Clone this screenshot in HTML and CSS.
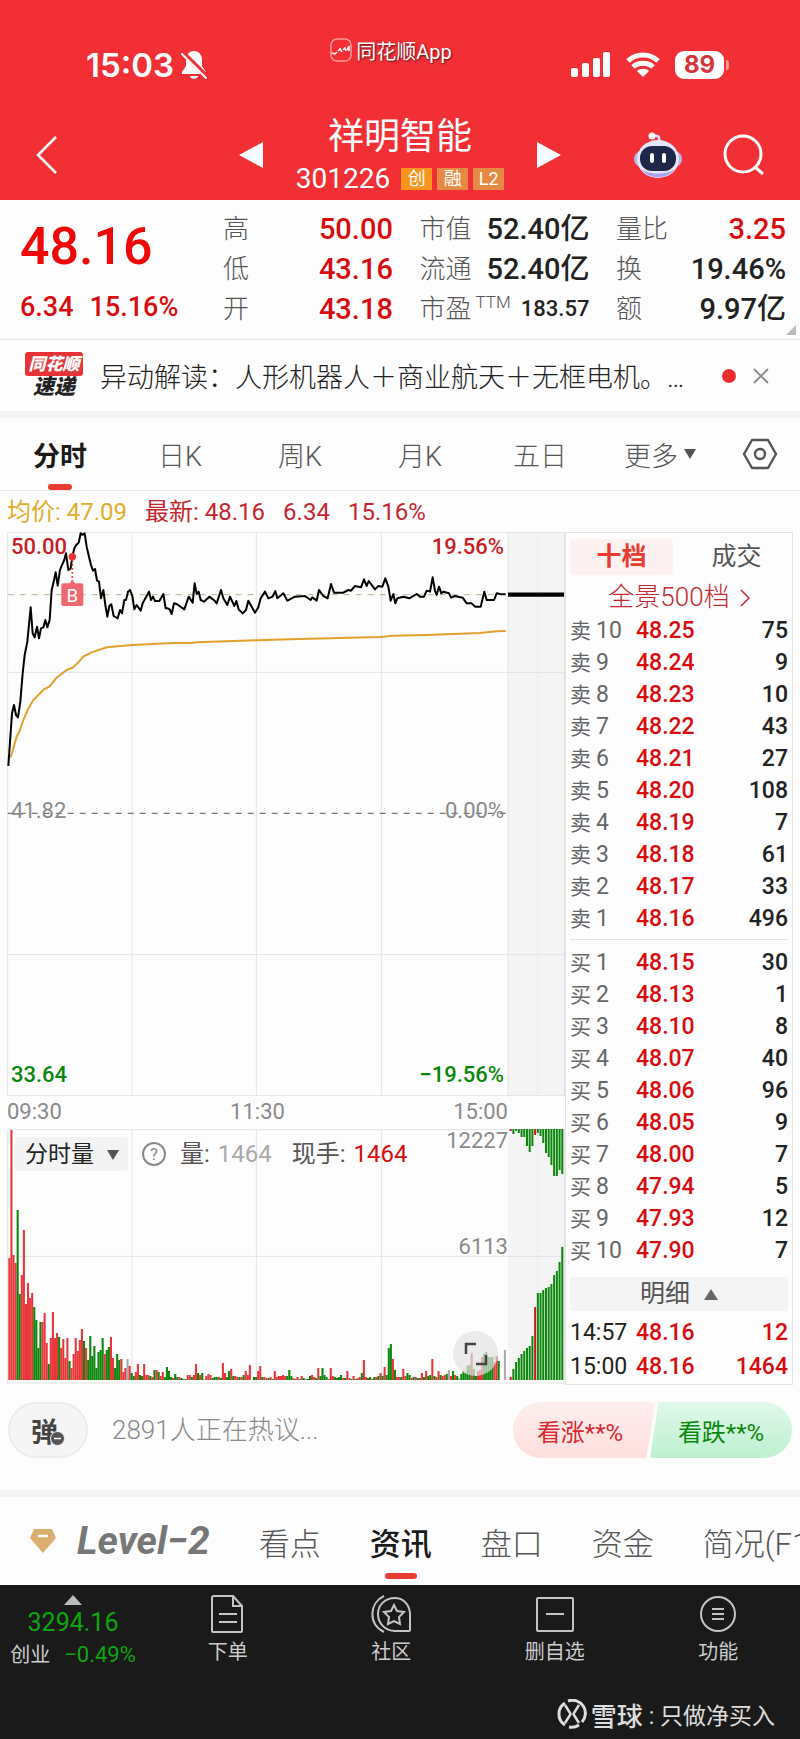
FILE: index.html
```html
<!DOCTYPE html>
<html lang="zh-CN">
<head>
  <meta charset="UTF-8" />
  <meta name="viewport" content="width=device-width, initial-scale=1.0"/>
  <title>祥明智能 301226</title>
  <link rel="stylesheet" href="styles.css">
</head>
<body>

  <!-- Header -->
  <header class="header">
    <div class="status-bar">
      <div class="status-left">
        <span class="clock">15:03</span>
        <svg width="28" height="30" viewBox="0 0 28 30">
          <path d="M14 1c-5 0-8 4-8 9v6l-4 6v2h24v-2l-4-6v-6c0-5-3-9-8-9zM10 26c1 4 7 4 8 0z" fill="#fff"/>
          <path d="M3 3l24 24" stroke="#f12f35" stroke-width="5"/>
          <path d="M2 4l24 24" stroke="#fff" stroke-width="2" stroke-linecap="round"/>
        </svg>
      </div>
      <div class="app-mark">
        <svg width="22" height="24" viewBox="0 0 22 24" fill="none" stroke="#fff">
          <rect x="1" y="1" width="20" height="22" rx="6" stroke="#ff9a9c" stroke-width="1.5"/>
          <path d="M2 15l3 1 2-2M8 13l2-2 2 3M13 12l2-2 1 3M17 12l2-4v5" stroke-width="1.5"/>
        </svg>
        <span>同花顺App</span>
      </div>
      <div class="status-right">
        <svg width="40" height="26" viewBox="0 0 40 26" fill="#fff">
          <rect x="0" y="16" width="7" height="9" rx="2"/>
          <rect x="11" y="11" width="7" height="14" rx="2"/>
          <rect x="22" y="6" width="7" height="19" rx="2"/>
          <rect x="32" y="0" width="7" height="25" rx="2"/>
        </svg>
        <svg width="34" height="26" viewBox="0 0 34 26" fill="none" stroke="#fff" stroke-width="5">
          <path d="M2 9c8-8 22-8 30 0"/>
          <path d="M7 15c5-5 15-5 20 0"/>
          <path d="M17 25l-6-6c3-3 9-3 12 0z" fill="#fff" stroke="none"/>
        </svg>
        <span class="battery">89</span>
      </div>
    </div>

    <div class="title-bar">
      <button class="icon-btn" aria-label="返回">
        <svg width="24" height="42" viewBox="0 0 24 42" fill="none" stroke="#fff" stroke-width="2.5">
          <path d="M21 3L3 21l18 18"/>
        </svg>
      </button>
      <div class="stock-switch">
        <button class="icon-btn" aria-label="上一只">
          <svg width="24" height="26" viewBox="0 0 24 26" fill="#fff"><path d="M24 0v26L0 13z"/></svg>
        </button>
        <div class="stock-title">
          <h1>祥明智能</h1>
          <div class="stock-code">
            <span class="code">301226</span>
            <span class="tag tag-main">创</span>
            <span class="tag">融</span>
            <span class="tag">L2</span>
          </div>
        </div>
        <button class="icon-btn" aria-label="下一只">
          <svg width="24" height="26" viewBox="0 0 24 26" fill="#fff"><path d="M0 0v26l24-13z"/></svg>
        </button>
      </div>
      <div class="title-tools">
        <button class="icon-btn" aria-label="智能助手">
          <svg width="50" height="48" viewBox="0 0 50 48">
            <path d="M26 10c1-5-2-6-5-5" fill="none" stroke="#dfe0ff" stroke-width="2.5"/>
            <circle cx="19" cy="5" r="3.5" fill="#fff"/>
            <rect x="1" y="20" width="48" height="16" rx="8" fill="#b9b6f5"/>
            <ellipse cx="25" cy="28" rx="21" ry="19" fill="#e6e6ff"/>
            <path d="M8 38c8 11 26 11 34 0-8 6-26 6-34 0z" fill="#a9a4f2"/>
            <rect x="7" y="15" width="36" height="25" rx="12" fill="#1e2747"/>
            <rect x="17" y="22" width="4" height="10" rx="2" fill="#fff"/>
            <rect x="29" y="22" width="4" height="10" rx="2" fill="#fff"/>
          </svg>
        </button>
        <button class="icon-btn" aria-label="搜索">
          <svg width="42" height="42" viewBox="0 0 42 42" fill="none" stroke="#fff" stroke-width="3">
            <circle cx="20" cy="20" r="18"/>
            <path d="M32 33l8 7"/>
          </svg>
        </button>
      </div>
    </div>
  </header>

  <!-- Quote -->
  <section class="quote">
    <div class="quote-main">
      <div class="price">48.16</div>
      <div class="change"><span>6.34</span><span>15.16%</span></div>
    </div>
    <dl class="stats stats-a">
      <dt>高</dt><dd class="red">50.00</dd>
      <dt>低</dt><dd class="red">43.16</dd>
      <dt>开</dt><dd class="red">43.18</dd>
    </dl>
    <dl class="stats stats-b">
      <dt>市值</dt><dd>52.40亿</dd>
      <dt>流通</dt><dd>52.40亿</dd>
      <dt>市盈<sup>TTM</sup></dt><dd class="small">183.57</dd>
    </dl>
    <dl class="stats stats-c">
      <dt>量比</dt><dd class="red">3.25</dd>
      <dt>换</dt><dd>19.46%</dd>
      <dt>额</dt><dd>9.97亿</dd>
    </dl>
    <span class="corner"></span>
  </section>

  <!-- News -->
  <section class="news">
    <div class="news-logo">
      <span class="news-brand">同花顺</span>
      <span class="news-kind">速递</span>
    </div>
    <a class="news-text" href="#">异动解读：人形机器人＋商业航天＋无框电机。…</a>
    <span class="news-dot"></span>
    <button class="icon-btn" aria-label="关闭">
      <svg width="16" height="16" viewBox="0 0 16 16" stroke="#888" stroke-width="1.8"><path d="M1 1l14 14M15 1L1 15"/></svg>
    </button>
  </section>

  <!-- Period tabs -->
  <nav class="period-tabs">
    <button class="active">分时</button>
    <button>日K</button>
    <button>周K</button>
    <button>月K</button>
    <button>五日</button>
    <button class="more">更多<svg width="12" height="10" viewBox="0 0 12 10" fill="#555"><path d="M0 0h12L6 10z"/></svg></button>
    <button class="icon-btn" aria-label="设置">
      <svg width="36" height="32" viewBox="0 0 36 32" fill="none" stroke="#555" stroke-width="2.4">
        <path d="M10 2h16l8 14-8 14H10L2 16z" stroke-linejoin="round"/>
        <circle cx="18" cy="16" r="5"/>
      </svg>
    </button>
  </nav>

  <div class="legend">
    <span class="avg">均价: 47.09</span>
    <span>最新: 48.16</span>
    <span>6.34</span>
    <span>15.16%</span>
  </div>

  <main class="board">
    <div class="charts">
      <!-- Price chart -->
      <div class="price-chart">
        <svg viewBox="21 36 1674 1692" fill="none">
          <rect x="1524" y="36" width="170" height="1692" fill="#f4f4f4"/>
          <path class="grid" d="M23 37H1694M23 457H1694M23 1304H1694M23 1727H1694M23 37V1728M396 37V1728M769 37V1728M1144 37V1728M1524 37V1728M1693 37V1728"/>
          <path d="M1613 37V1728" stroke="#e2e2e2" stroke-width="3" stroke-dasharray="6 6"/>
          <path d="M23 880H1524" stroke="#777" stroke-width="4" stroke-dasharray="18 18"/>
          <path d="M23 224H1524" stroke="#b9b48a" stroke-width="3" stroke-dasharray="18 18"/>
          <polyline stroke="#e2a02c" stroke-width="6" points="32,712 50,650 58,635 70,600 85,565 100,540 132,508 148,500 170,473 200,450 218,443 232,430 250,410 275,397 320,382 397,375 520,369 575,369 590,367 770,361 870,358 1140,351 1180,347 1280,345 1440,339 1490,334 1517,333"/>
          <polyline stroke="#000" stroke-width="6" stroke-linejoin="round" points="25,738 36,580 42,555 48,585 54,592 61,545 68,460 74,405 82,365 92,262 98,340 104,352 111,320 117,355 123,325 130,322 136,300 142,322 149,300 155,210 161,185 167,157 173,197 180,150 186,135 192,122 198,100 205,150 212,145 217,110 223,85 229,75 236,68 242,40 248,44 254,40 260,80 267,110 273,135 279,152 285,147 291,182 297,185 303,235 310,210 316,255 322,290 328,258 334,253 341,288 353,295 360,270 366,280 373,240 378,240 384,215 390,210 397,228 403,268 410,255 422,272 428,250 447,215 453,240 459,230 465,243 478,243 490,222 497,265 503,265 509,268 515,282 522,250 530,252 553,268 566,230 578,248 584,190 590,222 596,215 602,240 612,245 628,230 645,243 650,250 663,210 670,235 682,255 690,230 703,258 709,243 716,268 728,280 738,270 745,242 752,255 765,278 775,262 782,235 795,215 805,235 818,230 826,213 832,235 850,220 862,242 885,230 915,228 932,240 937,232 950,242 957,210 970,228 983,235 993,192 1002,218 1030,218 1045,210 1053,212 1065,198 1083,202 1092,178 1100,198 1106,183 1125,208 1135,198 1147,200 1156,175 1165,200 1172,242 1180,222 1186,250 1192,235 1210,230 1228,235 1250,222 1260,230 1272,230 1280,212 1290,215 1298,172 1305,212 1310,225 1317,200 1324,220 1330,215 1347,220 1353,233 1365,228 1388,233 1400,250 1415,250 1425,260 1442,260 1453,215 1460,240 1482,240 1490,220 1500,222 1517,223"/>
          <path d="M1524 224H1692" stroke="#000" stroke-width="13"/>
          <path d="M217 120V190" stroke="#e8323c" stroke-width="5" stroke-dasharray="5 7"/>
          <circle cx="217" cy="110" r="11" fill="#ee3434"/>
          <path d="M190 190h18l9-9 9 9h18q6 0 6 6v56q0 6-6 6h-54q-6 0-6-6v-56q0-6 6-6z" fill="#f0686f"/>
          <text class="marker" x="217" y="245">B</text>
        </svg>
        <span class="lab top-left red">50.00</span>
        <span class="lab top-right red">19.56%</span>
        <span class="lab mid-left">41.82</span>
        <span class="lab mid-right">0.00%</span>
        <span class="lab bottom-left green">33.64</span>
        <span class="lab bottom-right green">−19.56%</span>
      </div>

      <div class="time-axis"><span>09:30</span><span>11:30</span><span>15:00</span></div>

      <!-- Volume chart -->
      <div class="volume-chart">
        <svg viewBox="21 237 1674 765">
          <rect x="1524" y="237" width="170" height="753" fill="#f4f4f4"/>
          <path class="grid" d="M23 239H1694M23 619H1694M23 999H1694M23 239V999M396 239V999M769 239V999M1144 239V999M1693 239V999"/>
          <path d="M1613 239V990" stroke="#e2e2e2" stroke-width="3" stroke-dasharray="6 6"/>
          <g id="volumeBars"></g>
          <g id="depthBars"></g>
        </svg>
        <div class="volume-tools">
          <div class="select-box">
            <select aria-label="指标">
              <option>分时量</option>
            </select>
            <svg width="12" height="10" viewBox="0 0 12 10" fill="#555"><path d="M0 0h12L6 10z"/></svg>
          </div>
          <button class="help" aria-label="说明">?</button>
          <span class="vol">量: <b>1464</b></span>
          <span>现手: <b class="red">1464</b></span>
        </div>
        <span class="lab vol-max">12227</span>
        <span class="lab vol-mid">6113</span>
        <button class="expand" aria-label="全屏">
          <svg width="24" height="24" viewBox="0 0 24 24" fill="none" stroke="#444" stroke-width="2.5"><path d="M2 12V2h10M22 13v9H12"/></svg>
        </button>
      </div>
    </div>

    <!-- Order book -->
    <aside class="orders">
      <div class="order-tabs">
        <button class="active">十档</button>
        <button>成交</button>
      </div>
      <a class="depth-link" href="#">全景500档
        <svg width="10" height="18" viewBox="0 0 10 18" fill="none" stroke="#c4262e" stroke-width="1.5"><path d="M1 1l8 8-8 8"/></svg>
      </a>
      <table class="sell">
        <tr><th>卖<i>10</i></th><td>48.25</td><td>75</td></tr>
        <tr><th>卖<i>9</i></th><td>48.24</td><td>9</td></tr>
        <tr><th>卖<i>8</i></th><td>48.23</td><td>10</td></tr>
        <tr><th>卖<i>7</i></th><td>48.22</td><td>43</td></tr>
        <tr><th>卖<i>6</i></th><td>48.21</td><td>27</td></tr>
        <tr><th>卖<i>5</i></th><td>48.20</td><td>108</td></tr>
        <tr><th>卖<i>4</i></th><td>48.19</td><td>7</td></tr>
        <tr><th>卖<i>3</i></th><td>48.18</td><td>61</td></tr>
        <tr><th>卖<i>2</i></th><td>48.17</td><td>33</td></tr>
        <tr><th>卖<i>1</i></th><td>48.16</td><td>496</td></tr>
      </table>
      <table class="buy">
        <tr><th>买<i>1</i></th><td>48.15</td><td>30</td></tr>
        <tr><th>买<i>2</i></th><td>48.13</td><td>1</td></tr>
        <tr><th>买<i>3</i></th><td>48.10</td><td>8</td></tr>
        <tr><th>买<i>4</i></th><td>48.07</td><td>40</td></tr>
        <tr><th>买<i>5</i></th><td>48.06</td><td>96</td></tr>
        <tr><th>买<i>6</i></th><td>48.05</td><td>9</td></tr>
        <tr><th>买<i>7</i></th><td>48.00</td><td>7</td></tr>
        <tr><th>买<i>8</i></th><td>47.94</td><td>5</td></tr>
        <tr><th>买<i>9</i></th><td>47.93</td><td>12</td></tr>
        <tr><th>买<i>10</i></th><td>47.90</td><td>7</td></tr>
      </table>
      <button class="detail-toggle">明细
        <svg width="14" height="11" viewBox="0 0 14 11" fill="#666"><path d="M7 0l7 11H0z"/></svg>
      </button>
      <table class="deals">
        <tr><th>14:57</th><td>48.16</td><td>12</td></tr>
        <tr><th>15:00</th><td>48.16</td><td>1464</td></tr>
      </table>
    </aside>
  </main>

  <!-- Comments -->
  <section class="talk">
    <button class="danmu" aria-label="弹幕">弹
      <svg width="15" height="15" viewBox="0 0 15 15"><circle cx="7.5" cy="7.5" r="7" fill="#555" stroke="#f5f5f5"/><path d="M4 7.5h7" stroke="#fff" stroke-width="1.5"/></svg>
    </button>
    <input type="text" aria-label="评论" placeholder="2891人正在热议...">
    <div class="votes">
      <button class="up">看涨**%</button>
      <button class="down">看跌**%</button>
    </div>
  </section>

  <!-- Content tabs -->
  <nav class="content-tabs">
    <svg width="28" height="26" viewBox="0 0 28 26">
      <path d="M5 1h18l4 9-13 15L1 10z" fill="#d9ae6e"/>
      <path d="M9 8h10" stroke="#fff" stroke-width="2.5"/>
    </svg>
    <button class="level">Level−2</button>
    <button>看点</button>
    <button class="active">资讯</button>
    <button>盘口</button>
    <button>资金</button>
    <button>简况(F10)</button>
  </nav>

  <!-- Bottom bar -->
  <footer class="footer">
    <div class="bottom-bar">
      <div class="index-box">
        <svg width="18" height="10" viewBox="0 0 18 10" fill="#bbb"><path d="M9 0l9 10H0z"/></svg>
        <span class="index-value">3294.16</span>
        <div class="index-row"><span>创业</span><span class="index-change">−0.49%</span></div>
      </div>
      <a href="#">
        <svg width="38" height="38" viewBox="0 0 38 38" fill="none" stroke="#c4c4c4" stroke-width="2">
          <path d="M5 1h19l9 10v25q0 1-1 1H4q-1 0-1-1V3q0-2 2-2zM24 1v10h9M10 19h18M10 27h18"/>
        </svg>
        下单
      </a>
      <a href="#">
        <svg width="44" height="38" viewBox="0 0 44 38" fill="none" stroke="#c4c4c4" stroke-width="2">
          <path d="M26 36h14q1 0 1-1V18C40 8 33 3 26 3 16 3 9 10 9 19s7 17 17 17z"/>
          <path d="M15 1C0 8-1 29 15 37"/>
          <path d="M25 10l3 6 7 1-5 5 1 7-6-3-6 3 1-7-5-5 7-1z"/>
        </svg>
        社区
      </a>
      <a href="#">
        <svg width="38" height="38" viewBox="0 0 38 38" fill="none" stroke="#c4c4c4" stroke-width="2">
          <rect x="1" y="3" width="36" height="33" rx="1"/><path d="M10 19h18"/>
        </svg>
        删自选
      </a>
      <a href="#">
        <svg width="38" height="38" viewBox="0 0 38 38" fill="none" stroke="#c4c4c4" stroke-width="2">
          <circle cx="19" cy="19" r="17"/><path d="M13 14h12M13 19h12M13 24h12"/>
        </svg>
        功能
      </a>
    </div>
    <div class="author">
      <svg width="30" height="30" viewBox="0 0 30 30" fill="none" stroke="#ddd" stroke-width="3">
        <path d="M8 4A13 13 0 0 0 8 26M11 2A13 13 0 0 1 25 23M12 28A13 13 0 0 0 22 26"/>
        <path d="M8 6l5 8q1 1 0 2l-5 8M22 6l-5 8q-1 1 0 2l5 8" stroke-width="2.5"/>
      </svg>
      <b>雪球</b><span>: 只做净买入</span>
    </div>
  </footer>

  <script src="chart.js"></script>
</body>
</html>
```

FILE: styles.css
```css
* {
  box-sizing: border-box;
}

body {
  margin: 0;
  background: #fdfdfd;
  color: #222;
  font-family: Roboto, "Noto Sans CJK SC", sans-serif;
  overflow-x: hidden;
}

button {
  border: none;
  background: none;
  padding: 0;
  margin: 0;
  font: inherit;
  color: inherit;
  cursor: pointer;
}

svg {
  display: block;
  flex-shrink: 0;
}

a {
  color: inherit;
  text-decoration: none;
}

.red {
  color: #d90b0f;
}

.green {
  color: #0a860a;
}

/* header */
.header {
  background: #f12f35;
  color: #fff;
  height: 200px;
}

.status-bar {
  display: grid;
  grid-template-columns: 1fr auto 1fr;
  height: 110px;
  padding: 0 72px 0 54px;
}

.status-left, .status-right {
  display: flex;
  align-items: center;
  padding-top: 20px;
}

.status-left {
  gap: 6px;
  padding-left: 32px;
}

.clock {
  font: 600 33px Inter, sans-serif;
}

.app-mark {
  display: flex;
  align-items: center;
  gap: 4px;
  height: 100px;
  font-size: 20px;
  text-shadow: 1px 1px 2px rgba(0, 0, 0, 0.6);
}

.status-right {
  justify-content: flex-end;
  gap: 15px;
}

.battery {
  position: relative;
  width: 49px;
  height: 28px;
  border-radius: 9px;
  background: #fff;
  color: #d4343a;
  font: 700 24px/28px Inter, sans-serif;
  text-align: center;
  margin-right: 4px;
}

.battery::after {
  content: "";
  position: absolute;
  right: -5px;
  top: 9px;
  width: 3px;
  height: 10px;
  border-radius: 0 4px 4px 0;
  background: #f79a9c;
}

.title-bar {
  display: grid;
  grid-template-columns: 1fr auto 1fr;
  align-items: center;
  height: 90px;
  padding: 0 35px;
}

.icon-btn svg {
  margin: auto;
}

.title-bar > .icon-btn {
  justify-self: start;
}

.stock-switch {
  display: flex;
  align-items: center;
  gap: 33px;
}

.stock-title {
  text-align: center;
}

.stock-title h1 {
  margin: 0 0 6px;
  font-size: 36px;
  font-weight: 400;
  line-height: 42px;
}

.stock-code {
  display: flex;
  align-items: center;
  gap: 5px;
  line-height: 30px;
}

.code {
  font-size: 28px;
  margin-right: 6px;
}

.tag {
  width: 31px;
  height: 22px;
  background: #e58a45;
  font-size: 18px;
  line-height: 22px;
}

.tag-main {
  background: #f7941d;
}

.title-tools {
  display: flex;
  justify-content: flex-end;
  align-items: center;
  gap: 40px;
}

/* quote */
.quote {
  position: relative;
  display: flex;
  justify-content: space-between;
  height: 140px;
  padding: 9px 14px 10px 20px;
  border-bottom: 1px solid #e4e4e4;
}

.price {
  color: #ee0808;
  font-size: 52px;
  font-weight: 500;
  line-height: 60px;
  padding-top: 8px;
}

.change {
  display: flex;
  gap: 16px;
  color: #d90b0f;
  font-size: 27px;
  font-weight: 500;
  line-height: 40px;
  padding-top: 10px;
}

.stats {
  display: grid;
  grid-template-columns: auto 1fr;
  grid-auto-rows: 40px;
  width: 170px;
  margin: 0;
  line-height: 40px;
}

.stats-a {
  margin-left: 18px;
}

.stats dt {
  width: 52px;
  color: #555;
  font-size: 26px;
  font-weight: 300;
  white-space: nowrap;
}

.stats dd {
  margin: 0;
  font-size: 29px;
  font-weight: 500;
  text-align: right;
  white-space: nowrap;
}

.stats dd.small {
  font-size: 22px;
}

.stats sup {
  font-size: 17px;
  line-height: 1;
  margin-left: 4px;
}

.corner {
  position: absolute;
  right: 4px;
  bottom: 4px;
  border-left: 10px solid transparent;
  border-bottom: 10px solid #bbb;
}

/* news */
.news {
  display: flex;
  align-items: center;
  height: 78px;
  padding: 0 31px 0 24px;
  border-bottom: 7px solid #f4f4f4;
}

.news-logo {
  display: flex;
  flex-direction: column;
  align-items: center;
  width: 60px;
  font-weight: 900;
  font-style: italic;
}

.news-brand {
  width: 58px;
  height: 24px;
  border-radius: 3px;
  background: #e63338;
  color: #fff;
  font-size: 17px;
  line-height: 24px;
  text-align: center;
}

.news-kind {
  font-size: 21px;
  line-height: 23px;
}

.news-text {
  flex: 1;
  margin-left: 16px;
  font-size: 27px;
  font-weight: 300;
  white-space: nowrap;
  overflow: hidden;
  text-overflow: ellipsis;
}

.news-dot {
  width: 14px;
  height: 14px;
  border-radius: 50%;
  background: #ee2f2f;
  margin: 0 17px 0 20px;
}

/* period tabs */
.period-tabs {
  display: grid;
  grid-template-columns: repeat(6, 3fr) 2fr;
  height: 73px;
  border-bottom: 1px solid #e8e8e8;
  color: #555;
  font-size: 27px;
  font-weight: 300;
}

.period-tabs button, .content-tabs button {
  position: relative;
}

.period-tabs .active, .content-tabs .active {
  color: #1a1a1a;
  font-weight: 700;
}

.period-tabs .active::after, .content-tabs .active::after {
  content: "";
  position: absolute;
  left: 50%;
  bottom: 0;
  width: 24px;
  height: 6px;
  margin-left: -12px;
  border-radius: 3px;
  background: #e93b32;
}

.more {
  display: flex;
  align-items: center;
  justify-content: center;
  gap: 6px;
}

.legend {
  display: flex;
  gap: 18px;
  height: 41px;
  padding-left: 7px;
  color: #c4262e;
  font-size: 24px;
  line-height: 42px;
}

.avg {
  color: #e0ad28;
}

/* charts */
.board {
  display: flex;
  margin: 0 7px;
}

.charts {
  flex: 1;
  min-width: 0;
}

.charts > div > svg:first-child {
  width: 100%;
  height: auto;
}

.grid {
  stroke: #e3e3e3;
  stroke-width: 3;
  fill: none;
}

.marker {
  fill: #fff;
  font-size: 56px;
  text-anchor: middle;
}

.price-chart, .volume-chart {
  position: relative;
}

.lab {
  position: absolute;
  color: #8a8a8a;
  font-size: 22px;
  line-height: 28px;
}

.lab.red {
  color: #c81d25;
}

.lab.green {
  color: #0a860a;
}

.top-left, .mid-left, .bottom-left {
  left: 4px;
}

.top-right, .mid-right, .bottom-right {
  right: 61px;
}

.top-left, .top-right {
  top: 1px;
}

.mid-left, .mid-right {
  top: 265px;
}

.bottom-left, .bottom-right {
  bottom: 7px;
}

.lab.red, .lab.green {
  font-weight: 500;
}

.vol-max, .vol-mid {
  right: 57px;
}

.vol-max {
  top: -2px;
}

.vol-mid {
  top: 104px;
}

.time-axis {
  display: flex;
  justify-content: space-between;
  height: 33px;
  padding-right: 57px;
  color: #8a8a8a;
  font-size: 22px;
  line-height: 31px;
}

.volume-tools {
  position: absolute;
  left: 8px;
  top: 8px;
  display: flex;
  align-items: center;
  height: 34px;
  color: #555;
  font-size: 24px;
  line-height: 32px;
  white-space: nowrap;
}

.volume-tools b {
  margin-left: 2px;
  font-weight: 400;
}

.vol {
  margin-right: 20px;
}

.volume-tools .vol b {
  color: #aaa;
}

.select-box {
  position: relative;
  width: 113px;
}

.select-box select {
  appearance: none;
  width: 100%;
  height: 34px;
  border: none;
  border-radius: 4px;
  background: #f3f3f3;
  padding: 0 0 0 10px;
  color: #222;
  font: 23px Roboto, "Noto Sans CJK SC", sans-serif;
}

.select-box svg {
  position: absolute;
  right: 9px;
  top: 13px;
  pointer-events: none;
}

.help {
  width: 24px;
  height: 24px;
  margin: 0 14px;
  border: 2px solid #8a8a8a;
  border-radius: 50%;
  color: #8a8a8a;
  font-size: 17px;
  line-height: 20px;
}

.expand {
  position: absolute;
  right: 67px;
  bottom: 8px;
  display: flex;
  align-items: center;
  justify-content: center;
  width: 45px;
  height: 45px;
  border-radius: 50%;
  background: rgba(225, 225, 225, 0.7);
}

/* order book */
.orders {
  width: 228px;
  padding: 6px 4px 0;
  border: 1px solid #e3e3e3;
}

.order-tabs {
  display: grid;
  grid-template-columns: 1fr 1fr;
  gap: 12px;
  height: 36px;
  color: #555;
  font-size: 25px;
  line-height: 36px;
}

.order-tabs .active {
  border-radius: 4px;
  background: #fdf1f1;
  color: #e93b32;
  font-weight: 700;
}

.depth-link {
  display: flex;
  align-items: center;
  justify-content: center;
  gap: 10px;
  height: 40px;
  padding-top: 5px;
  color: #c4262e;
  font-size: 26px;
  font-weight: 300;
  line-height: 35px;
}

.orders table {
  width: 100%;
  border-collapse: collapse;
  table-layout: fixed;
  font-size: 23px;
  line-height: 32px;
}

.orders tr {
  height: 32px;
}

.orders th, .orders td {
  padding: 0;
}

.orders th {
  width: 66px;
  color: #666;
  font-size: 21px;
  font-weight: 400;
  text-align: left;
}

.orders i {
  margin-left: 5px;
  font-size: 23px;
  font-style: normal;
}

.orders td {
  font-weight: 500;
  color: #d90b0f;
}

.orders td:last-child {
  color: #222;
  text-align: right;
}

.buy {
  margin-top: 4px;
}

.buy::before {
  content: "";
  display: table-caption;
  border-top: 1px solid #e3e3e3;
  height: 7px;
}

.detail-toggle {
  display: flex;
  align-items: center;
  justify-content: center;
  gap: 14px;
  width: 100%;
  height: 34px;
  margin: 10px 0 5px;
  background: #f4f4f4;
  color: #555;
  font-size: 25px;
  line-height: 34px;
}

.orders .deals tr {
  height: 34px;
}

.orders .deals th {
  color: #222;
  font-size: 23px;
}

.orders .deals td {
  color: #d90b0f;
}

/* comments */
.talk {
  display: flex;
  align-items: center;
  height: 112px;
  padding: 0 8px 15px;
  border-bottom: 7px solid #f4f4f4;
}

.danmu {
  display: flex;
  align-items: center;
  justify-content: center;
  width: 80px;
  height: 56px;
  border: 2px solid #ececec;
  border-radius: 28px;
  background: #f5f5f5;
  color: #444;
  font-size: 27px;
  font-weight: 700;
}

.danmu svg {
  align-self: flex-end;
  margin: 0 0 10px -8px;
}

.talk input {
  flex: 1;
  min-width: 0;
  margin-left: 24px;
  padding: 0;
  border: none;
  outline: none;
  background: none;
  font: 300 26px Roboto, "Noto Sans CJK SC", sans-serif;
}

.talk input::placeholder {
  color: #8a8a8a;
}

.votes {
  display: flex;
}

.votes button {
  width: 142px;
  height: 56px;
  font-size: 24px;
}

.votes .up {
  padding-right: 8px;
  border-radius: 28px 4px 4px 28px;
  background: linear-gradient(#fdeeee, #fddfdd);
  clip-path: polygon(0 0, 100% 0, 94% 100%, 0 100%);
  color: #d8292f;
}

.votes .down {
  margin-left: -5px;
  border-radius: 4px 28px 28px 4px;
  background: linear-gradient(#e0f8ea, #bdf0d0);
  clip-path: polygon(6% 0, 100% 0, 100% 100%, 0 100%);
  color: #0a860a;
}

/* content tabs */
.content-tabs {
  display: flex;
  align-items: center;
  gap: 49px;
  height: 88px;
  padding-left: 29px;
  overflow: hidden;
  color: #555;
  font-size: 31px;
  font-weight: 300;
  white-space: nowrap;
}

.content-tabs button {
  height: 88px;
  flex-shrink: 0;
}

.content-tabs .level {
  margin-left: -29px;
  color: #777;
  font: italic 700 39px Roboto, sans-serif;
}

.content-tabs .active {
  font-weight: 500;
}

.content-tabs .active::after {
  bottom: 6px;
  width: 32px;
  margin-left: -16px;
}

/* footer */
.footer {
  height: 155px;
  background: #1a1a1a;
  color: #ccc;
}

.bottom-bar {
  display: grid;
  grid-template-columns: 146px repeat(4, 1fr);
  height: 104px;
  padding-top: 10px;
  font-size: 20px;
}

.bottom-bar a {
  display: flex;
  flex-direction: column;
  align-items: center;
  line-height: 38px;
}

.index-box {
  display: flex;
  flex-direction: column;
  align-items: center;
}

.index-value {
  color: #0fa50f;
  font-size: 25px;
  line-height: 36px;
}

.index-row {
  display: flex;
  gap: 14px;
  line-height: 28px;
}

.index-change {
  color: #0fa50f;
  font-size: 22px;
}

.author {
  display: flex;
  align-items: center;
  justify-content: flex-end;
  height: 50px;
  padding-right: 25px;
  color: #ddd;
  font-size: 23px;
}

.author b {
  margin: 0 6px 0 4px;
  font-size: 26px;
  font-weight: 500;
}
```

FILE: chart.js
```js
// one entry per minute: bar height + r (up), g (down) or n (flat)
const volumes = (
  '122r 250r 125r 117r 170g 86g 105r 150r 76r 97r 82r 87r 73g 60g 32g 58g 58r 67r 37r 16g ' +
  '42r 68r 42r 47r 43g 32r 41r 22r 42r 19g 12r 26r 42r 29r 40r 51r 39g 32r 20g 44g ' +
  '24g 34g 12g 28g 30g 42g 26r 30g 33g 43r 22r 12g 26g 20g 21r 8r 12r 21n 14r 7g ' +
  '4g 8r 16r 5g 4g 16r 5r 5r 4g 3r 10g 10r 8g 4r 8r 3g 13g 9g 3g 2r ' +
  '6g 3g 3r 2g 1g 1g 5r 5r 3g 5r 16r 7g 5r 7g 1n 4r 6r 5r 2g 3g ' +
  '3g 3r 2g 17r 7r 3g 9g 11r 4g 4r 3r 3g 3r 5g 9r 5r 15r 0n 3g 3g ' +
  '9r 14r 3g 3r 2r 2g 3r 1g 9r 3r 4r 4r 5r 4r 4g 10g 4g 2r 1g 3r ' +
  '1g 4r 2g 1n 1g 4g 5r 3r 2g 12r 4g 12g 5g 3g 1r 12r 4r 3g 2g 3g ' +
  '5g 2r 2g 9r 2r 1g 4r 1g 2r 3r 7g 20r 3r 2g 3g 1r 3g 3r 4g 7r ' +
  '4g 13r 5g 32g 36g 21r 10g 3r 3r 3g 11r 4r 7g 5g 2r 3g 3r 2g 2r 7r ' +
  '3g 9r 4g 5g 21r 4g 3r 9r 5g 4r 5r 6g 10n 4r 9g 5r 4g 2n 6g 9g ' +
  '7g 14g 15g 27r 11g 4g 9r 10r 23r 26g 28g 23g 23g 23g 18r 24r 19g 0n 0n 30n'
).split(' ');

// pairs of [bottom, top] bars beside the volume chart
const depth = [
  [3, 2], [11, 5], [18, 2], [22, 4], [26, 8], [29, 8], [32, 17], [34, 23], [44, 17], [73, 6],
  [87, 4], [87, 7], [90, 14], [92, 24], [93, 28], [96, 36], [105, 47], [109, 47], [118, 41], [133, 45]
];

const colors = { r: '#e8363b', g: '#0a860a', n: '#aaaaaa' };

function addBar(parent, x, y, width, height, color) {
  const bar = document.createElementNS('http://www.w3.org/2000/svg', 'rect');
  bar.setAttribute('x', x);
  bar.setAttribute('y', y);
  bar.setAttribute('width', width);
  bar.setAttribute('height', height);
  bar.setAttribute('fill', color);
  parent.appendChild(bar);
}

const volumeBars = document.getElementById('volumeBars');
volumes.forEach(function (item, i) {
  const h = parseInt(item) * 3;
  addBar(volumeBars, 25 + i * 6.22, 990 - h, 6.22, h, colors[item.slice(-1)]);
});

const depthBars = document.getElementById('depthBars');
depth.forEach(function (pair, i) {
  const x = 1529 + i * 8.15;
  const color = i === 0 || i === 9 ? '#d4161c' : '#0a860a';
  addBar(depthBars, x, 990 - pair[0] * 3, 6, pair[0] * 3, color);
  addBar(depthBars, x, 237, 6, pair[1] * 3, color);
});
```
